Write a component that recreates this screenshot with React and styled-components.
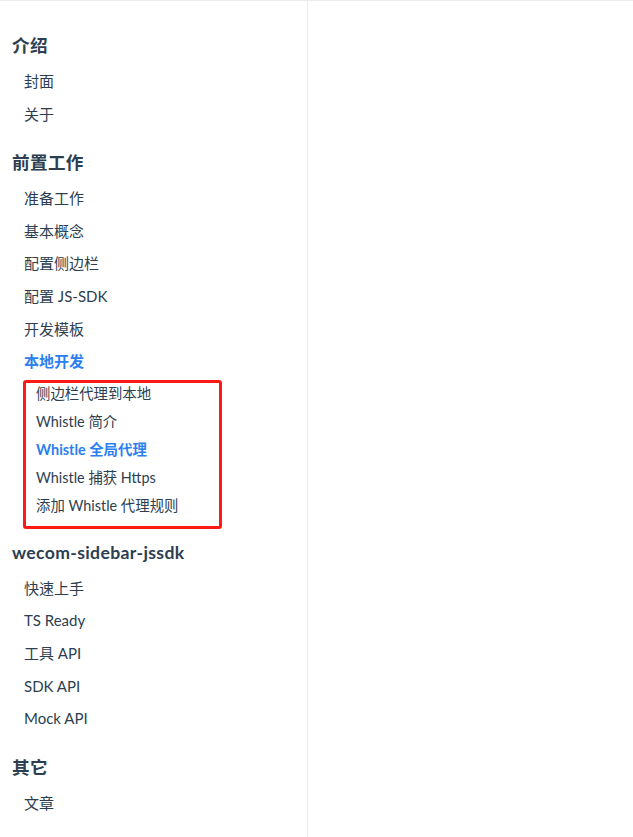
import React from "react";
import styled, { createGlobalStyle } from "styled-components";

const GlobalStyle = createGlobalStyle`
  html, body { margin: 0; padding: 0; background: #fff; }
  body {
    font-family: Lato, "Noto Sans CJK SC", sans-serif;
    color: #2c3e50;
    -webkit-font-smoothing: antialiased;
  }
  * { box-sizing: border-box; }
`;

const Page = styled.div`
  display: flex;
  min-height: 837px;
  border-top: 1px solid #eaecef;
`;

const Sidebar = styled.aside`
  width: 308px;
  flex: none;
  border-right: 1px solid #eaecef;
  padding-top: 27px;
`;

const Main = styled.main`
  flex: 1;
`;

const Group = styled.section`
  & + & { margin-top: 15px; }
`;

const Heading = styled.div`
  font-size: 17.6px;
  font-weight: 700;
  line-height: 24px;
  letter-spacing: 0.35px;
  padding: 6px 0 7px 12px;
  color: #2c3e50;
`;

const List = styled.ul`
  list-style: none;
  margin: 0;
  padding: 0;
`;

const Item = styled.li`
  font-size: 15px;
  line-height: 22.6px;
  padding: 5px 0 5px 24px;
  color: ${(p) => (p.$active ? "#2b80f0" : "#2c3e50")};
  font-weight: ${(p) => (p.$active ? 700 : 400)};
`;

const SubList = styled.ul`
  position: relative;
  list-style: none;
  margin: 2px 0 0;
  padding: 0;
`;

const SubItem = styled.li`
  font-size: 14.4px;
  line-height: 28px;
  padding-left: 36px;
  color: ${(p) => (p.$active ? "#2b80f0" : "#2c3e50")};
  font-weight: ${(p) => (p.$active ? 700 : 400)};
`;

const Highlight = styled.div`
  position: absolute;
  left: 23px;
  top: 0;
  width: 199px;
  bottom: -9px;
  border: 3px solid #ff1a14;
  border-radius: 3px;
  pointer-events: none;
`;

const groups = [
  { title: "介绍", items: [{ label: "封面" }, { label: "关于" }] },
  {
    title: "前置工作",
    items: [
      { label: "准备工作" },
      { label: "基本概念" },
      { label: "配置侧边栏" },
      { label: "配置 JS-SDK" },
      { label: "开发模板" },
      {
        label: "本地开发",
        active: true,
        children: [
          { label: "侧边栏代理到本地" },
          { label: "Whistle 简介" },
          { label: "Whistle 全局代理", active: true },
          { label: "Whistle 捕获 Https" },
          { label: "添加 Whistle 代理规则" },
        ],
      },
    ],
  },
  {
    title: "wecom-sidebar-jssdk",
    items: [
      { label: "快速上手" },
      { label: "TS Ready" },
      { label: "工具 API" },
      { label: "SDK API" },
      { label: "Mock API" },
    ],
  },
  { title: "其它", items: [{ label: "文章" }] },
];

export default function App() {
  return (
    <>
      <GlobalStyle />
      <Page>
        <Sidebar>
          {groups.map((g) => (
            <Group key={g.title}>
              <Heading>{g.title}</Heading>
              <List>
                {g.items.map((it) => (
                  <React.Fragment key={it.label}>
                    <Item $active={it.active}>{it.label}</Item>
                    {it.children && (
                      <li>
                        <SubList>
                          {it.children.map((c) => (
                            <SubItem key={c.label} $active={c.active}>
                              {c.label}
                            </SubItem>
                          ))}
                          <Highlight />
                        </SubList>
                      </li>
                    )}
                  </React.Fragment>
                ))}
              </List>
            </Group>
          ))}
        </Sidebar>
        <Main />
      </Page>
    </>
  );
}
